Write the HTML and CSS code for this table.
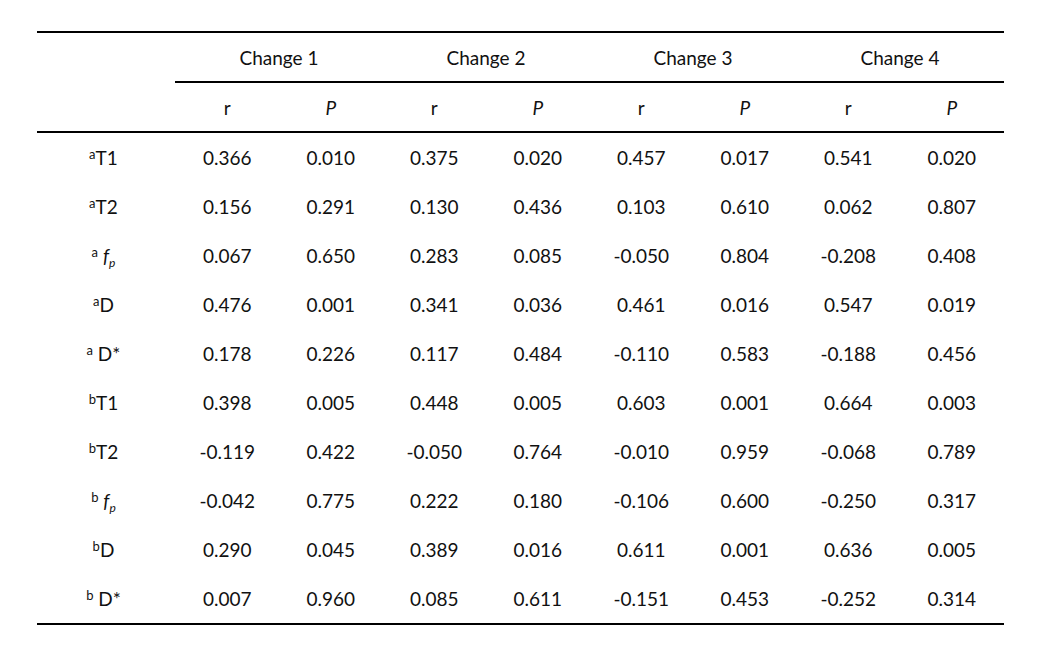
FILE: index.html
```html
<!DOCTYPE html>
<html>
<head>
<meta charset="utf-8">
<link rel="stylesheet" href="styles.css">
</head>
<body>
<table class="stats">
  <colgroup>
    <col class="c-label">
    <col class="c-num"><col class="c-num"><col class="c-num"><col class="c-num">
    <col class="c-num"><col class="c-num"><col class="c-num"><col class="c-num">
  </colgroup>
  <thead>
    <tr class="group-row">
      <th></th>
      <th colspan="2" class="group">Change 1</th>
      <th colspan="2" class="group">Change 2</th>
      <th colspan="2" class="group">Change 3</th>
      <th colspan="2" class="group">Change 4</th>
    </tr>
    <tr class="sub-row">
      <th></th>
      <th>r</th><th><i>P</i></th>
      <th>r</th><th><i>P</i></th>
      <th>r</th><th><i>P</i></th>
      <th>r</th><th><i>P</i></th>
    </tr>
  </thead>
  <tbody>
    <tr><td class="lbl"><sup>a</sup>T1</td><td>0.366</td><td>0.010</td><td>0.375</td><td>0.020</td><td>0.457</td><td>0.017</td><td>0.541</td><td>0.020</td></tr>
    <tr><td class="lbl"><sup>a</sup>T2</td><td>0.156</td><td>0.291</td><td>0.130</td><td>0.436</td><td>0.103</td><td>0.610</td><td>0.062</td><td>0.807</td></tr>
    <tr><td class="lbl"><sup>a</sup> <i>f<sub>p</sub></i></td><td>0.067</td><td>0.650</td><td>0.283</td><td>0.085</td><td>-0.050</td><td>0.804</td><td>-0.208</td><td>0.408</td></tr>
    <tr><td class="lbl"><sup>a</sup>D</td><td>0.476</td><td>0.001</td><td>0.341</td><td>0.036</td><td>0.461</td><td>0.016</td><td>0.547</td><td>0.019</td></tr>
    <tr><td class="lbl"><sup>a</sup> D*</td><td>0.178</td><td>0.226</td><td>0.117</td><td>0.484</td><td>-0.110</td><td>0.583</td><td>-0.188</td><td>0.456</td></tr>
    <tr><td class="lbl"><sup>b</sup>T1</td><td>0.398</td><td>0.005</td><td>0.448</td><td>0.005</td><td>0.603</td><td>0.001</td><td>0.664</td><td>0.003</td></tr>
    <tr><td class="lbl"><sup>b</sup>T2</td><td>-0.119</td><td>0.422</td><td>-0.050</td><td>0.764</td><td>-0.010</td><td>0.959</td><td>-0.068</td><td>0.789</td></tr>
    <tr><td class="lbl"><sup>b</sup> <i>f<sub>p</sub></i></td><td>-0.042</td><td>0.775</td><td>0.222</td><td>0.180</td><td>-0.106</td><td>0.600</td><td>-0.250</td><td>0.317</td></tr>
    <tr><td class="lbl"><sup>b</sup>D</td><td>0.290</td><td>0.045</td><td>0.389</td><td>0.016</td><td>0.611</td><td>0.001</td><td>0.636</td><td>0.005</td></tr>
    <tr><td class="lbl"><sup>b</sup> D*</td><td>0.007</td><td>0.960</td><td>0.085</td><td>0.611</td><td>-0.151</td><td>0.453</td><td>-0.252</td><td>0.314</td></tr>
  </tbody>
</table>
</body>
</html>
```
FILE: styles.css
```css
html, body {
  margin: 0;
  padding: 0;
  background: #ffffff;
}

body {
  font-family: "Lato", "Open Sans", sans-serif;
  font-size: 19px;
  color: #111111;
}

.stats {
  width: 966px;
  margin: 31px auto 0;
  border-collapse: collapse;
  table-layout: fixed;
  border-top: 2px solid #000;
  border-bottom: 2px solid #000;
}

.c-label { width: 138px; }
.c-num { width: 103.5px; }

.stats th,
.stats td {
  padding: 0;
  height: 48px;
  text-align: center;
  vertical-align: middle;
  font-weight: normal;
  line-height: 1;
}

.stats tbody td {
  height: 49px;
}

.stats th.group {
  border-bottom: 2px solid #000;
}

.sub-row th {
  border-bottom: 2px solid #000;
}

.stats td.lbl {
  padding-right: 6px;
}

.lbl sup {
  font-size: 13px;
  vertical-align: 6px;
  line-height: 0;
}

.lbl sub {
  font-size: 12px;
  vertical-align: -4px;
  line-height: 0;
}
```
